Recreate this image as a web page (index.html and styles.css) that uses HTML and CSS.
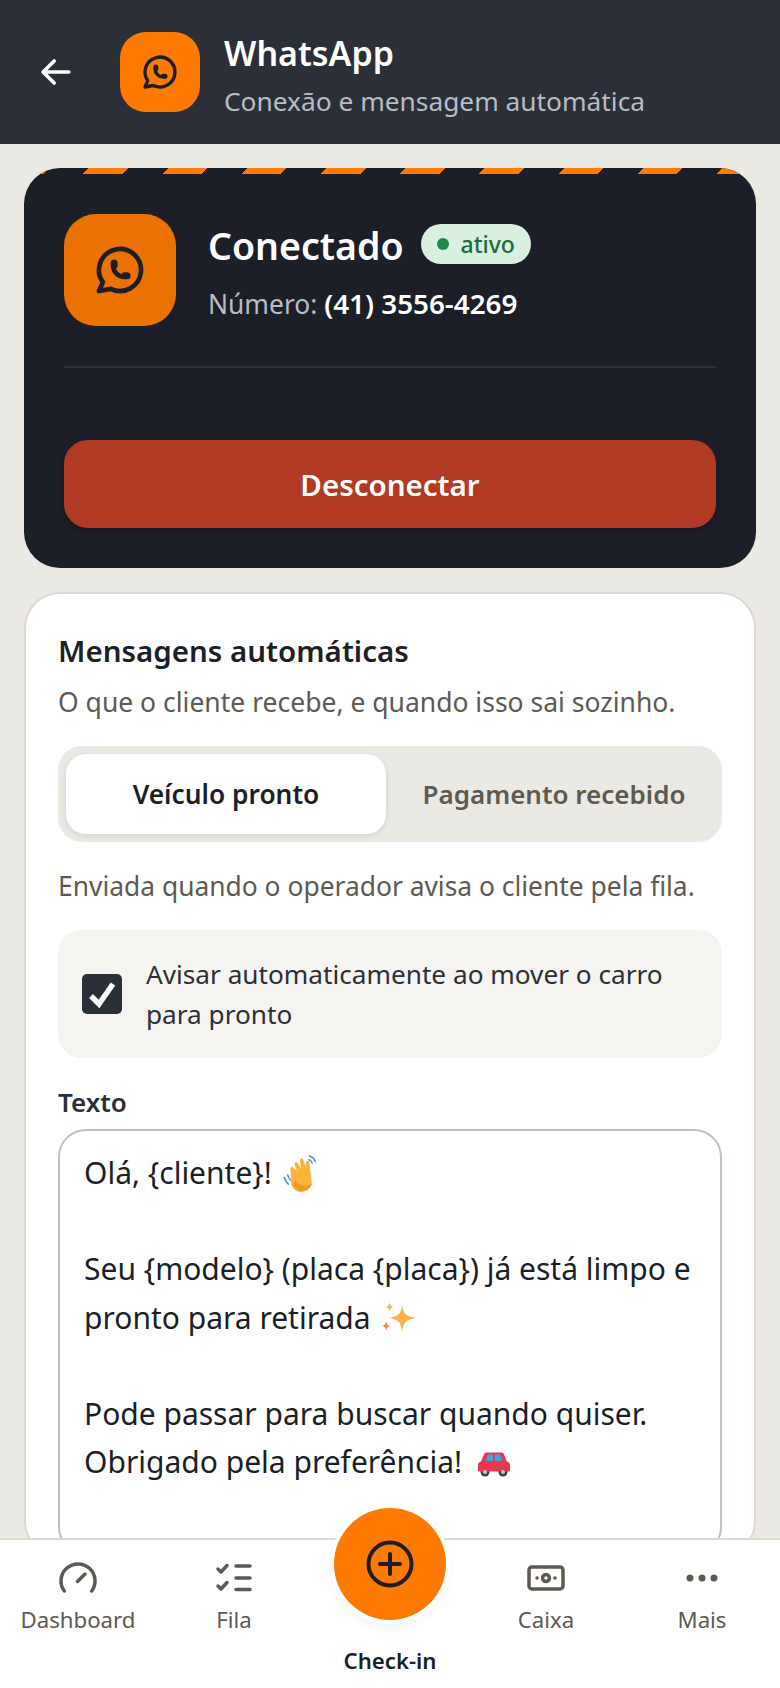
FILE: index.html
```html
<!DOCTYPE html>
<html lang="pt-BR">
<head>
    <meta charset="UTF-8">
    <meta name="viewport" content="width=device-width, initial-scale=1.0">
    <title>WhatsApp</title>
    <link rel="stylesheet" href="styles.css">
</head>
<body>
    <header class="topbar">
        <button class="back-btn" type="button" aria-label="Voltar">
            <svg width="44" height="44" viewBox="0 0 24 24" fill="none" stroke="#fff" stroke-width="2" stroke-linecap="round" stroke-linejoin="round"><path d="M5 12h14M5 12l6 6M5 12l6-6"/></svg>
        </button>
        <div class="topbar-icon">
            <svg width="40" height="40" viewBox="0 0 24 24" fill="none" stroke="#1c1f27" stroke-width="2" stroke-linecap="round" stroke-linejoin="round"><path d="M3 21l1.65-3.8a9 9 0 1 1 3.4 2.9l-5.05.9"/><path d="M9 10a.5.5 0 0 0 1 0v-1a.5.5 0 0 0-1 0v1a5 5 0 0 0 5 5h1a.5.5 0 0 0 0-1h-1a.5.5 0 0 0 0 1"/></svg>
        </div>
        <div class="topbar-text">
            <div class="topbar-title">WhatsApp</div>
            <div class="topbar-sub">Conexão e mensagem automática</div>
        </div>
    </header>

    <main class="content">
        <section class="status-card">
            <div class="status-row">
                <div class="status-icon">
                    <svg width="56" height="56" viewBox="0 0 24 24" fill="none" stroke="#1c1f27" stroke-width="2" stroke-linecap="round" stroke-linejoin="round"><path d="M3 21l1.65-3.8a9 9 0 1 1 3.4 2.9l-5.05.9"/><path d="M9 10a.5.5 0 0 0 1 0v-1a.5.5 0 0 0-1 0v1a5 5 0 0 0 5 5h1a.5.5 0 0 0 0-1h-1a.5.5 0 0 0 0 1"/></svg>
                </div>
                <div class="status-text">
                    <div class="status-line">
                        <span class="status-title">Conectado</span>
                        <span class="badge"><span class="badge-dot"></span>ativo</span>
                    </div>
                    <div class="status-number">Número: <strong>(41) 3556-4269</strong></div>
                </div>
            </div>
            <hr class="status-divider">
            <button class="disconnect-btn" type="button">Desconectar</button>
        </section>

        <section class="msg-card">
            <h2 class="msg-title">Mensagens automáticas</h2>
            <p class="msg-sub">O que o cliente recebe, e quando isso sai sozinho.</p>

            <div class="tabs">
                <button class="tab tab-active" type="button">Veículo pronto</button>
                <button class="tab" type="button">Pagamento recebido</button>
            </div>

            <p class="tab-note">Enviada quando o operador avisa o cliente pela fila.</p>

            <label class="auto-row">
                <span class="checkbox">
                    <svg width="40" height="40" viewBox="0 0 40 40" fill="none" stroke="#fff" stroke-width="5.5"><path d="M9 22l8 8L31 10"/></svg>
                </span>
                <span>Avisar automaticamente ao mover o carro para pronto</span>
            </label>

            <div class="field-label">Texto</div>
            <div class="msg-box">
                <div>Olá, {cliente}! <svg class="emoji" width="38" height="38" viewBox="0 0 36 36"><path d="M2 22c1 3 2 5 4 6.500M5.500 20c.5 2 1 3.500 2.500 4.500M26 2c2.500.5 4.500 2.500 5.500 5M25.500 5.500c1.500.5 2.500 1.500 3 3" fill="none" stroke="#4a9ad4" stroke-width="1.500" stroke-linecap="round"/><path d="M8 15c-1-2 1.500-3.500 3-2l3 3-2-6c-.6-2 2-3 3-1.200l3 5.200-1-8c-.2-2 2.800-2.500 3.300-.5l2 7.500.5-5c.2-2 3-2 3.200 0l.8 9c.5 4 2 7 1 11-1 5-5 8-10 8-4 0-7-2.500-9-7z" fill="#fbb43a"/><path d="M13 25c2 3 5 5 9 5 3 0 5-1 7-3-1 4-5 8-9.500 8-4 0-7-2.500-9-7z" fill="#ef9a1e"/></svg></div>
                <div class="blank"></div>
                <div>Seu {modelo} (placa {placa}) já está limpo e</div>
                <div>pronto para retirada <svg class="emoji" width="38" height="38" viewBox="0 0 36 36"><path d="M21 5c1 9 3 11 13 13-10 2-12 4-13 14-1-10-3-12-12-14 9-2 11-4 12-13z" fill="#fdb24b"/><path d="M9 3c.5 3 1.500 4 4 4.500-2.500.5-3.500 1.500-4 4.500-.5-3-1.500-4-4-4.500 2.500-.5 3.500-1.500 4-4.500z" fill="#fcb64f"/><path d="M6 21c.5 3 1.500 4 4 4.500-2.500.5-3.500 1.500-4 4.500-.5-3-1.500-4-4-4.500 2.500-.5 3.500-1.500 4-4.500z" fill="#f78c52"/></svg></div>
                <div class="blank"></div>
                <div>Pode passar para buscar quando quiser.</div>
                <div>Obrigado pela preferência! <svg class="emoji emoji-car" width="36" height="36" viewBox="0 0 36 36"><circle cx="9" cy="27" r="4.500" fill="#4b3a4a"/><circle cx="27" cy="27" r="4.500" fill="#4b3a4a"/><path d="M2 25v-5c0-2 1-3 3-3.500l3-7c.5-1.500 1.500-2 3-2h14c1.500 0 2.500.5 3 2l3 7c2 .5 3 1.500 3 3.500v5c0 1-.5 1.500-1.500 1.500h-29C2.500 26.500 2 26 2 25z" fill="#e8394f"/><path d="M10 16l2-6.500h5V16zM19 9.500h5l2 6.500h-7z" fill="#36a9e8"/><circle cx="9" cy="27" r="2" fill="#c9c3cc"/><circle cx="27" cy="27" r="2" fill="#c9c3cc"/></svg></div>
                <div class="blank"></div>
            </div>
        </section>
    </main>

    <nav class="bottom-nav">
        <a class="nav-item">
            <svg width="44" height="44" viewBox="0 0 44 44" fill="none" stroke="#5e5a52" stroke-width="3.500" stroke-linecap="round"><path d="M8.300 35a17 17 0 1 1 27.400 0"/><path d="M21.500 25.500l7.500-7.500"/></svg>
            <span>Dashboard</span>
        </a>
        <a class="nav-item">
            <svg width="44" height="44" viewBox="0 0 44 44" fill="none" stroke="#5e5a52" stroke-width="3.500" stroke-linecap="round" stroke-linejoin="round"><path d="M6 13l3 3 6-6.500M6 30l3 3 6-6.500"/><path d="M24 10h14M24 22h14M24 33.500h14"/></svg>
            <span>Fila</span>
        </a>
        <a class="nav-item nav-checkin">
            <span class="fab">
                <svg width="56" height="56" viewBox="0 0 56 56" fill="none" stroke="#1c1f27" stroke-width="4" stroke-linecap="round"><circle cx="28" cy="28" r="21.500"/><path d="M28 18v20M18 28h20"/></svg>
            </span>
            <span>Check-in</span>
        </a>
        <a class="nav-item">
            <svg width="44" height="44" viewBox="0 0 44 44" fill="none" stroke="#5e5a52" stroke-width="3.500" stroke-linecap="round"><rect x="5" y="11" width="34" height="22" rx="3"/><circle cx="22" cy="22" r="3.500"/><path d="M13 22h.1M31 22h.1"/></svg>
            <span>Caixa</span>
        </a>
        <a class="nav-item">
            <svg width="44" height="44" viewBox="0 0 44 44" fill="#5e5a52"><circle cx="10" cy="22" r="3.500"/><circle cx="22" cy="22" r="3.500"/><circle cx="34" cy="22" r="3.500"/></svg>
            <span>Mais</span>
        </a>
    </nav>
</body>
</html>
```

FILE: styles.css
```css
* {
    box-sizing: border-box;
}
body {
    margin: 0;
    width: 780px;
    height: 1688px;
    display: flex;
    flex-direction: column;
    overflow: hidden;
    position: relative;
    font-family: "Noto Sans", sans-serif;
    background-color: #ebe9e4;
    color: #1c1f27;
}
button {
    font-family: inherit;
    border: none;
    cursor: pointer;
}

/* top bar */
.topbar {
    height: 144px;
    flex-shrink: 0;
    display: flex;
    align-items: center;
    background-color: #2b2f38;
    padding-left: 34px;
}
.back-btn {
    display: flex;
    width: 44px;
    height: 44px;
    padding: 0;
    background: none;
}
.topbar-icon {
    width: 80px;
    height: 80px;
    margin: 0 24px 0 42px;
    display: flex;
    align-items: center;
    justify-content: center;
    border-radius: 26px;
    background-color: #ff7a00;
}
.topbar-text {
    padding-top: 5px;
}
.topbar-title {
    font-size: 34px;
    line-height: 44px;
    font-weight: 600;
    color: #fff;
}
.topbar-sub {
    font-size: 26.3px;
    line-height: 36px;
    margin-top: 8px;
    color: #b8bcc6;
}

/* page */
.content {
    flex: 1;
    min-height: 0;
    overflow: hidden;
    padding: 24px 24px 0;
}

/* connection card */
.status-card {
    position: relative;
    overflow: hidden;
    padding: 46px 40px 40px;
    border-radius: 36px;
    background-color: #1c1f27;
}
.status-card::before {
    content: "";
    position: absolute;
    top: 0;
    left: 0;
    right: 0;
    height: 6px;
    background: repeating-linear-gradient(-45deg, #ff7a00 0 28px, transparent 28px 56px);
}
.status-row {
    display: flex;
    align-items: center;
    gap: 32px;
}
.status-icon {
    width: 112px;
    height: 112px;
    display: flex;
    align-items: center;
    justify-content: center;
    border-radius: 32px;
    background-color: #ec7200;
}
.status-text {
    padding-top: 4px;
}
.status-line {
    display: flex;
    align-items: center;
    gap: 17px;
}
.status-title {
    font-size: 37.5px;
    line-height: 48px;
    font-weight: 600;
    color: #fff;
}
.badge {
    display: flex;
    align-items: center;
    gap: 12px;
    height: 40px;
    margin-top: -4px;
    padding: 0 16px;
    border-radius: 20px;
    font-size: 23px;
    font-weight: 500;
    background-color: #d9efe0;
    color: #1a6b3c;
}
.badge-dot {
    width: 12px;
    height: 12px;
    border-radius: 50%;
    background-color: #1f8a4c;
}
.status-number {
    margin-top: 15px;
    font-size: 26.4px;
    line-height: 36px;
    color: #b8bcc6;
}
.status-number strong {
    font-size: 27.8px;
    font-weight: 600;
    color: #fff;
}
.status-divider {
    margin: 40px 0 72px;
    height: 2px;
    border: none;
    background-color: #2f323a;
}
.disconnect-btn {
    display: block;
    width: 100%;
    height: 88px;
    border-radius: 24px;
    font-size: 29.5px;
    font-weight: 600;
    color: #fff;
    background-color: #b03a23;
    box-shadow: 0 2px 4px rgba(0,0,0,0.3);
}

/* messages card */
.msg-card {
    margin-top: 24px;
    padding: 36px 32px 0;
    border: 2px solid #ded9cf;
    border-radius: 36px;
    background-color: #fff;
}
.msg-title {
    margin: 0;
    font-size: 29.5px;
    line-height: 42px;
    font-weight: 600;
}
.msg-sub {
    margin: 12px 0 0;
    font-size: 26.5px;
    line-height: 36px;
    color: #5e5a52;
}
.tabs {
    display: flex;
    gap: 8px;
    margin-top: 26px;
    padding: 8px;
    height: 96px;
    border-radius: 24px;
    background-color: #ebe9e4;
}
.tab {
    flex: 1;
    padding: 0;
    border-radius: 20px;
    font-size: 26px;
    font-weight: 600;
    color: #5e5a52;
    background: none;
}
.tab-active {
    font-size: 26.3px;
    color: #1c1f27;
    background-color: #fff;
    box-shadow: 0 2px 6px rgba(0,0,0,0.1);
}
.tab-note {
    margin: 26px 0 0;
    font-size: 26.4px;
    line-height: 36px;
    color: #5e5a52;
}
.auto-row {
    display: flex;
    align-items: center;
    gap: 24px;
    margin-top: 26px;
    padding: 24px;
    border-radius: 24px;
    background-color: #f5f4f0;
    font-size: 26.2px;
    line-height: 40px;
    color: #2b2f38;
}
.checkbox {
    flex-shrink: 0;
    width: 40px;
    height: 40px;
    display: flex;
    border-radius: 5px;
    background-color: #2b2f38;
}
.field-label {
    margin-top: 26px;
    font-size: 26px;
    line-height: 36px;
    font-weight: 600;
    color: #2b2f38;
}
.msg-box {
    margin-top: 9px;
    padding: 18px 24px;
    border: 2px solid #c5c0b3;
    border-radius: 28px;
    font-size: 30px;
    line-height: 48.2px;
}
.blank {
    height: 48.2px;
}
.emoji {
    vertical-align: -8px;
    margin-left: 2px;
}
.emoji-car {
    margin-left: 6px;
}

/* bottom navigation */
.bottom-nav {
    position: absolute;
    left: 0;
    right: 0;
    bottom: 0;
    height: 150px;
    display: grid;
    grid-template-columns: repeat(5, 1fr);
    border-top: 2px solid #ded9cf;
    background-color: #fff;
}
.nav-item {
    display: flex;
    flex-direction: column;
    align-items: center;
    padding-top: 16px;
    font-size: 22.2px;
    line-height: 32px;
    color: #5e5a52;
}
.nav-item svg {
    margin-bottom: 4px;
}
.nav-checkin {
    padding-top: 0;
    font-weight: 600;
    color: #1c1f27;
}
.fab {
    width: 112px;
    height: 112px;
    margin-top: -32px;
    margin-bottom: 25px;
    flex-shrink: 0;
    display: flex;
    align-items: center;
    justify-content: center;
    border-radius: 50%;
    background-color: #ff7a00;
    box-shadow: 0 0 0 4px #fff, 0 6px 16px rgba(0,0,0,0.06);
}
.fab svg {
    margin: 0;
}
```
